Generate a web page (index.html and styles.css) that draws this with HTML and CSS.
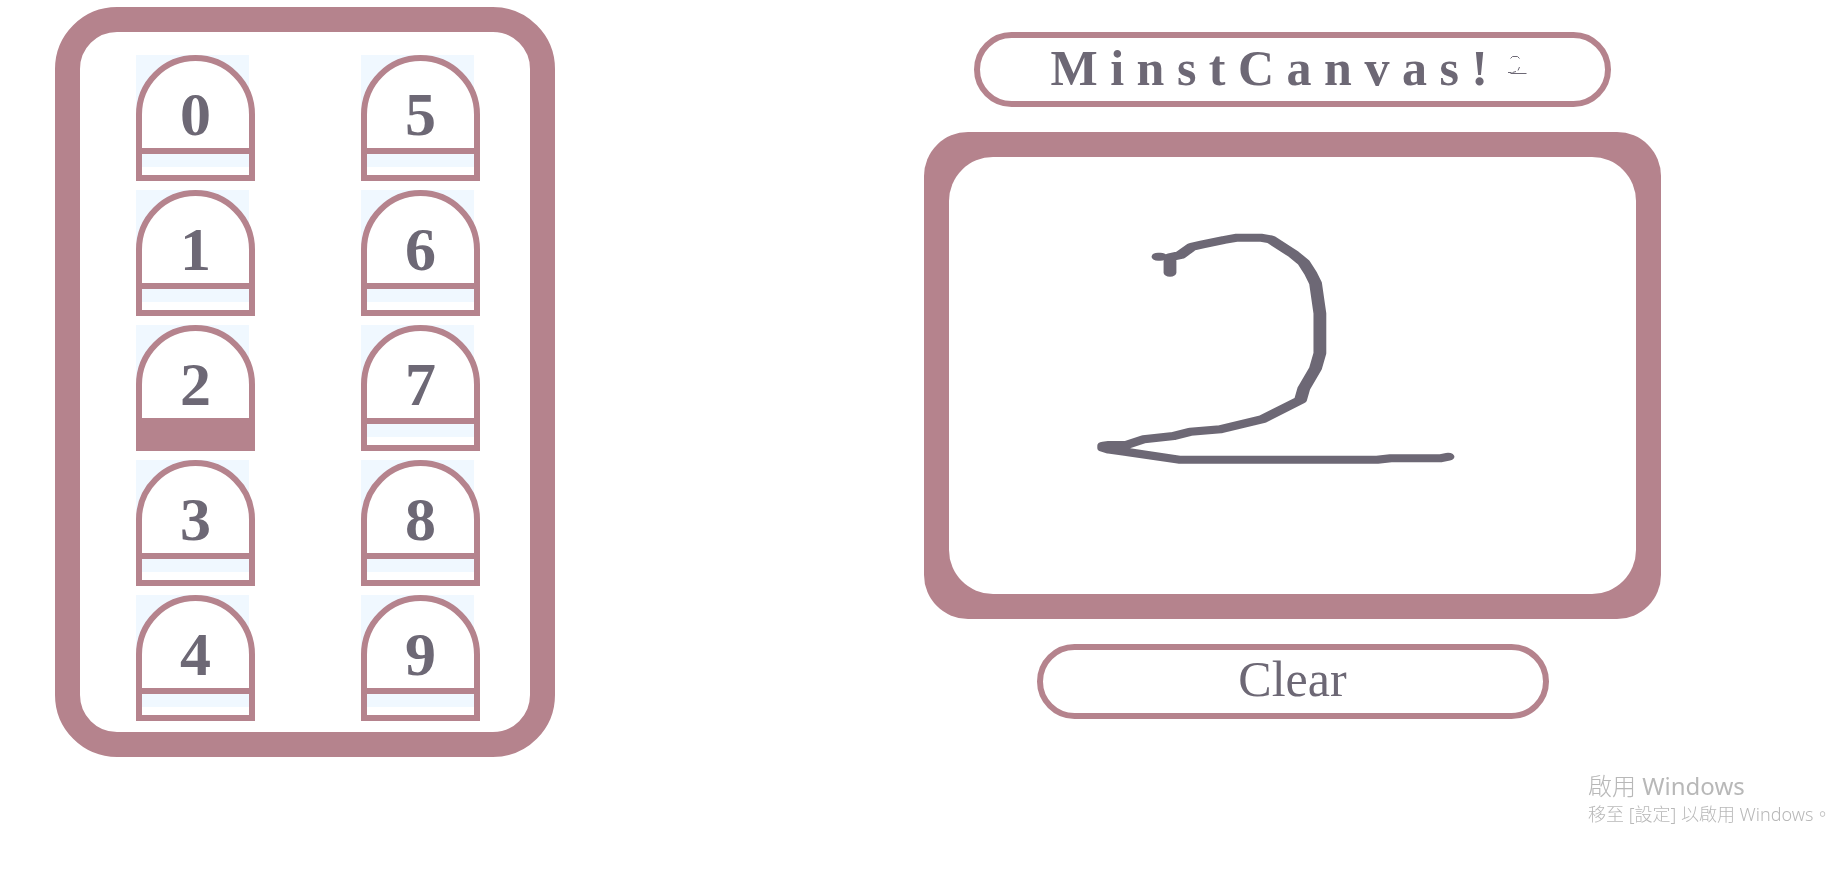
FILE: index.html
```html
<!DOCTYPE html>
<html lang="zh-Hant">
<head>
<meta charset="utf-8">
<title>MinstCanvas!</title>
<link rel="stylesheet" href="styles.css">
</head>
<body>
<main class="layout">
  <section class="digits" aria-label="Prediction">
    <div class="digit"><div class="dome">0</div><div class="bar"></div></div>
    <div class="digit"><div class="dome">1</div><div class="bar"></div></div>
    <div class="digit"><div class="dome">2</div><div class="bar bar-full"></div></div>
    <div class="digit"><div class="dome">3</div><div class="bar"></div></div>
    <div class="digit"><div class="dome">4</div><div class="bar"></div></div>
    <div class="digit"><div class="dome">5</div><div class="bar"></div></div>
    <div class="digit"><div class="dome">6</div><div class="bar"></div></div>
    <div class="digit"><div class="dome">7</div><div class="bar"></div></div>
    <div class="digit"><div class="dome">8</div><div class="bar"></div></div>
    <div class="digit"><div class="dome">9</div><div class="bar"></div></div>
  </section>
  <section class="stage">
    <header class="title">
      <h1 class="title-text">MinstCanvas!</h1>
      <svg class="preview" viewBox="0 0 28 40" aria-hidden="true">
        <path d="M9.500 8.500L11.500 6.500H16.500L18.500 8.500M18.500 17L17 20.500M15 21.500L11.500 22.500M7 22.500H10.500M9.500 23.500H25.500"/>
      </svg>
    </header>
    <div class="frame">
      <svg class="drawing" viewBox="0 0 429 437" preserveAspectRatio="none" role="img" aria-label="Drawing">
        <path d="M130.500 99.700H132"/>
        <path d="M138 115.700V100.300L144.500 98L151.800 89.700L158 87.500L171.600 83L180 80.700H194.500L200.800 82.300L215.300 97.300L221.600 105.700L225.800 116.300L228.900 126.300L231.600 156.300V196.300L228.900 211.300L221.600 231.300L219.500 243L195.500 262.300L169.500 272.300L150.800 274.700L140.300 279L121.600 282.300L111.200 287.700L100 288L96.600 288.700V291L100 292.700L111.200 295L143.500 302.700H267.400L275.800 301.300H307L311.600 299.700"/>
      </svg>
    </div>
    <button class="clear" type="button">Clear</button>
  </section>
</main>
<aside class="watermark">
  <p class="watermark-title">啟用 <span class="latin">Windows</span></p>
  <p class="watermark-text">移至 [設定] 以啟用 Windows。</p>
</aside>
</body>
</html>
```

FILE: styles.css
```css
:root {
  --rose: #b5838d;
  --ink: #6d6875;
  --paper: #fff;
}

* {
  box-sizing: border-box;
}

body {
  margin: 0;
  min-height: 100vh;
  background: var(--paper);
  color: var(--ink);
  font-family: "Liberation Serif", "Noto Sans CJK TC", serif;
}

.layout {
  display: grid;
  grid-template-columns: 500px 1fr;
  column-gap: 192px;
  align-items: start;
  padding: 7px 0 0 55px;
}

.digits {
  display: grid;
  grid-template-rows: repeat(5, 126px);
  grid-template-columns: 1fr 1fr;
  grid-auto-flow: column;
  justify-items: center;
  row-gap: 9px;
  padding: 23px 0 11px;
  border: 25px solid var(--rose);
  border-radius: 62px;
}

.digit {
  width: 113px;
  height: 112px;
  background: #f0f8ff;
}

.dome {
  display: flex;
  align-items: center;
  justify-content: center;
  width: 119px;
  height: 99px;
  padding-top: 18px;
  border: 6px solid var(--rose);
  border-radius: 60px 60px 0 0;
  background: var(--paper);
  font-size: 62px;
  font-weight: bold;
  line-height: 68px;
}

.bar {
  width: 119px;
  height: 27px;
  border: 6px solid var(--rose);
  border-top: 0;
}

.bar-full {
  background: var(--rose);
}

.stage {
  display: flex;
  flex-direction: column;
  align-items: center;
  gap: 25px;
  padding-top: 25px;
}

.title,
.clear {
  display: flex;
  align-items: center;
  justify-content: center;
  height: 75px;
  border: 6px solid var(--rose);
  border-radius: 38px;
  background: var(--paper);
}

.title {
  width: 637px;
  max-width: 100%;
  padding-right: 6px;
}

.title-text {
  margin: 0;
  padding-bottom: 4px;
  font-size: 50px;
  letter-spacing: 0.25em;
  line-height: 58px;
}

.preview {
  width: 28px;
  height: 40px;
  fill: none;
  stroke: var(--ink);
  stroke-width: 1;
}

.frame {
  width: 737px;
  max-width: 100%;
  padding: 25px;
  border-radius: 44px;
  background: var(--rose);
}

.drawing {
  display: block;
  width: 100%;
  height: 437px;
  border-radius: 44px;
  background: var(--paper);
  fill: none;
  stroke: var(--ink);
  stroke-width: 8;
  stroke-linecap: round;
  stroke-linejoin: round;
}

.clear {
  width: 512px;
  max-width: 100%;
  padding: 0 0 5px;
  color: inherit;
  font: 50px/58px "Liberation Serif", serif;
  cursor: pointer;
}

.watermark {
  position: fixed;
  right: 0;
  bottom: 50px;
  width: 250px;
  color: #b8b8b8;
  font-family: "Noto Sans", "Noto Sans CJK TC", sans-serif;
  font-weight: 300;
  white-space: nowrap;
}

.watermark p {
  margin: 0;
}

.watermark .latin {
  font-weight: 400;
}

.watermark-title {
  font-size: 24px;
  line-height: 32px;
}

.watermark-text {
  font-size: 18px;
  line-height: 24px;
}
```
